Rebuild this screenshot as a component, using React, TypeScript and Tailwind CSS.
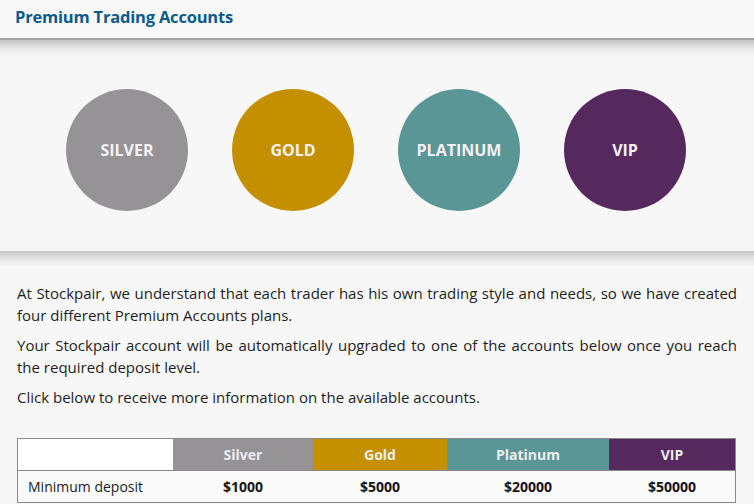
const plans = [
  { name: "Silver", bg: "bg-[#959395]", deposit: "$1000", w: "w-[140px]" },
  { name: "Gold", bg: "bg-[#c49000]", deposit: "$5000", w: "w-[134px]" },
  { name: "Platinum", bg: "bg-[#5a9696]", deposit: "$20000", w: "w-[162px]" },
  { name: "VIP", bg: "bg-[#55295e]", deposit: "$50000", w: "w-[126px]" },
];

export default function App() {
  return (
    <div className="w-[754px] h-[504px] overflow-hidden bg-[#f7f7f7] font-['Open_Sans','Lato',sans-serif] text-[#1c1c1c]">
      {/* Title bar */}
      <div className="h-[40px] border-b-2 border-[#a3a3a3] bg-[#f8f8f8] px-[15px] pt-[6px]">
        <h1 className="text-[16.5px] font-bold text-[#0d5a8b] leading-[22px] tracking-[-0.2px]">Premium Trading Accounts</h1>
      </div>

      {/* Circles panel */}
      <div className="h-[211px] bg-[linear-gradient(to_bottom,#c2c2c2_0px,#e6e6e6_8px,#f7f7f7_16px)] pt-[49px] pl-[66px] flex gap-[44px]">
        {plans.map((p) => (
          <div
            key={p.name}
            className={`w-[122px] h-[122px] rounded-full ${p.bg} flex items-center justify-center text-[#f4f0f4] font-bold text-[16px] uppercase`}
          >
            {p.name}
          </div>
        ))}
      </div>
      <div className="h-[15px] bg-[linear-gradient(to_bottom,#c6c6c6,#e4e4e4_50%,#f7f7f7)]" />

      {/* Intro copy */}
      <div className="px-[17px] pt-[16px] text-[15px] leading-[22px] text-justify space-y-[8px] text-[#1e1e1e]">
        <p>
          At Stockpair, we understand that each trader has his own trading style and needs, so we have created four
          different Premium Accounts plans.
        </p>
        <p>
          Your Stockpair account will be automatically upgraded to one of the accounts below once you reach the
          required deposit level.
        </p>
        <p>Click below to receive more information on the available accounts.</p>
      </div>

      {/* Plans table */}
      <div className="mx-[17px] mt-[30px] w-[719px] border border-[#8a8a8a] text-[14px]">
        <div className="flex h-[32px] border-b border-[#8a8a8a]">
          <div className="w-[155px] bg-white" />
          {plans.map((p) => (
            <div key={p.name} className={`${p.w} ${p.bg} flex items-center justify-center font-bold text-[#ededed]`}>
              {p.name}
            </div>
          ))}
        </div>
        <div className="flex h-[31px] bg-[#fafafa]">
          <div className="w-[155px] pl-[10px] flex items-center text-[#1c1c1c]">Minimum deposit</div>
          {plans.map((p) => (
            <div key={p.name} className={`${p.w} flex items-center justify-center font-bold text-[#151515]`}>
              {p.deposit}
            </div>
          ))}
        </div>
      </div>
    </div>
  );
}
